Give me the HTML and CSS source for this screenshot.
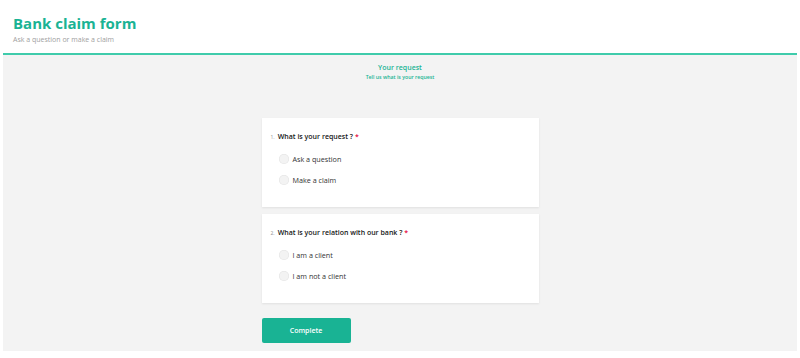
FILE: index.html
```html
<!DOCTYPE html>
<html lang="en">
<head>
<meta charset="utf-8">
<title>Bank claim form</title>
<link rel="stylesheet" href="styles.css">
</head>
<body>
<div class="page">
  <header class="header">
    <h1 class="title">Bank claim form</h1>
    <p class="subtitle">Ask a question or make a claim</p>
  </header>
  <main class="body">
    <div class="page-head">
      <div class="page-title">Your request</div>
      <div class="page-desc">Tell us what is your request</div>
    </div>
    <div class="column">
      <section class="card">
        <div class="question"><span class="num">1.</span><span class="qtext">What is your request ?</span><span class="req">*</span></div>
        <label class="option"><span class="radio"></span><span>Ask a question</span></label>
        <label class="option"><span class="radio"></span><span>Make a claim</span></label>
      </section>
      <section class="card">
        <div class="question"><span class="num">2.</span><span class="qtext">What is your relation with our bank ?</span><span class="req">*</span></div>
        <label class="option"><span class="radio"></span><span>I am a client</span></label>
        <label class="option"><span class="radio"></span><span>I am not a client</span></label>
      </section>
      <div class="actions"><button class="btn">Complete</button></div>
    </div>
  </main>
</div>
</body>
</html>
```
FILE: styles.css
```css
html, body { margin: 0; padding: 0; background: #fff; }
body { font-family: "Open Sans", "Noto Sans", sans-serif; color: #404040; }
.page { padding: 0 3px 7px 3px; }
.header {
  padding: 13px 10px 8px 10px;
  border-bottom: 2px solid #3fcbab;
}
.title {
  margin: 0;
  font-size: 15px;
  line-height: 20px;
  font-weight: 700;
  color: #1ab394;
}
.subtitle {
  margin: 2px 0 0 0;
  font-size: 7px;
  line-height: 10px;
  color: #a0a0a0;
}
.body {
  background: #f3f3f3;
  height: 296px;
  box-sizing: border-box;
  padding-top: 8px;
}
.page-head { text-align: center; color: #1ab394; }
.page-title { font-size: 7px; line-height: 10px; font-weight: 600; }
.page-desc { font-size: 5.2px; line-height: 8px; font-weight: 600; }
.column {
  width: 277px;
  margin: 37px auto 0 auto;
  display: flex;
  flex-direction: column;
  gap: 7px;
}
.card {
  background: #fff;
  height: 89px;
  box-sizing: border-box;
  padding: 14px 0 0 9px;
  box-shadow: 0 1px 2px rgba(0,0,0,0.08);
}
.question {
  display: flex;
  align-items: baseline;
  font-size: 7px;
  line-height: 10px;
  font-weight: 600;
  color: #161616;
}
.num { font-size: 5px; font-weight: 400; color: #909090; margin-right: 3px; }
.req { color: #e50a3e; margin-left: 2px; }
.option {
  display: flex;
  align-items: center;
  gap: 4px;
  margin: 5px 0 0 8px;
  height: 16px;
  font-size: 7.2px;
  color: #333;
}
.option + .option { margin-top: 5px; }
.question + .option { margin-top: 9px; }
.radio {
  width: 10px;
  height: 10px;
  border-radius: 50%;
  background: #f3f3f3;
  box-shadow: inset 0 0 0 0.5px #e2e2e2;
}
.actions { margin-top: 6px; }
.btn {
  width: 89px;
  height: 25px;
  border: none;
  border-radius: 2px;
  background: #19b394;
  color: #fff;
  font-family: inherit;
  font-size: 7px;
  font-weight: 600;
}
```
